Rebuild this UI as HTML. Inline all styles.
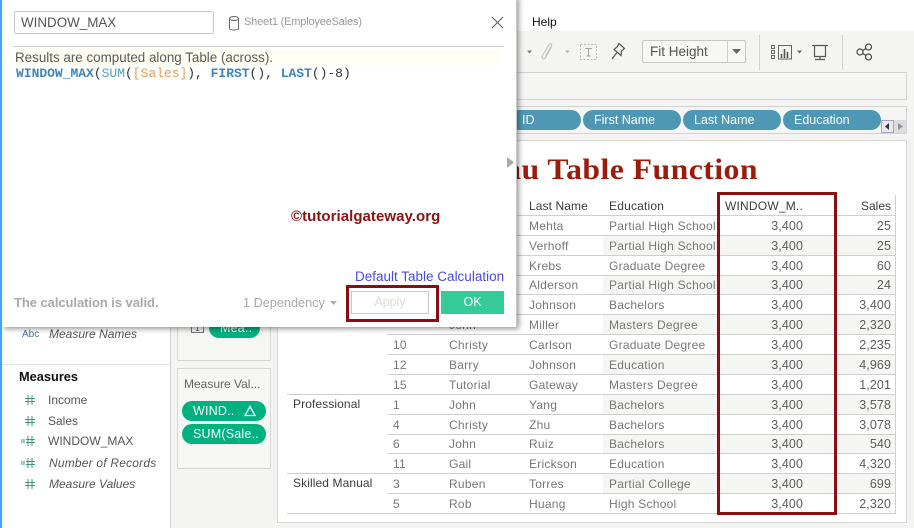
<!DOCTYPE html>
<html><head><meta charset="utf-8">
<style>
html,body{margin:0;padding:0}
body{width:914px;height:528px;overflow:hidden;position:relative;background:#f4f4f3;font-family:"Liberation Sans",sans-serif;font-size:12px;color:#6f6f6f}
div,span.a{position:absolute;box-sizing:border-box}
.t{position:absolute;height:16px;line-height:16px;white-space:nowrap}
.r{text-align:right}
.h{color:#3c3c3c}
.g{color:#3c3c3c}
.d{color:#777;letter-spacing:.25px}
.n{color:#5d5d5d;font-size:12.5px;letter-spacing:.1px}
.ln{position:absolute;height:1px;background:#cfcfcf;left:388px;width:508px}
.gl{left:287px;width:609px}
.sh{position:absolute;left:603px;width:292px;background:#f5f5f4}
.pill{position:absolute;height:20px;border-radius:10px;background:#4f98b5;color:#fff;line-height:20px;font-size:12.5px;padding-left:11px;white-space:nowrap;overflow:hidden}
.gp{position:absolute;background:#00b180;color:#fff;border-radius:10px;height:20px;line-height:20px;font-size:12.5px;padding-left:11px;left:182px;width:84px;letter-spacing:.2px;white-space:nowrap}
.li{position:absolute;left:48px;color:#555;font-size:12px;height:16px;line-height:16px;white-space:nowrap}
.i{font-style:italic}
.hs{position:absolute;left:20px;width:16px;height:10px}
</style></head>
<body>
<!-- top -->
<div style="left:0;top:0;width:914px;height:31px;background:#fff"></div>
<span class="t" style="left:532px;top:14px;color:#111;font-size:12px">Help</span>
<!-- toolbar -->
<svg style="position:absolute;left:520px;top:35px" width="360" height="35" viewBox="0 0 360 35" fill="none">
<path d="M7 15.500h5l-2.500 3z" fill="#777"/>
<path d="M31.500 12l-6 10.500c-1.500 2.500-4.500 1-3.200-1.500l6.700-11.500c1-1.800 3.500-.5 2.500 1.300l-6 10.500" stroke="#c4c4c4" stroke-width="1.200"/>
<path d="M45 15.500h5l-2.500 3z" fill="#b5b5b5"/>
<rect x="60.500" y="9.500" width="16" height="15" stroke="#bbb" stroke-dasharray="2 1.500"/>
<path d="M65 13.500h7M68.500 13.500v7.500M66.500 21h4" stroke="#a5a5a5"/>
<path d="M92 24l5-6.500M94 14.500l7 6 .5-4.500 3-2.500-5.500-5-2 3.500z" stroke="#555" stroke-width="1.200"/>
<path d="M239.500 0v35M322.500 0v35" stroke="#d0d0d0"/>
<path d="M251.500 10.500h3v3h-3zM251.500 15.500h3v3h-3zM251.500 20.500h3v3h-3z" stroke="#666"/>
<rect x="258.500" y="10.500" width="13" height="13.500" stroke="#666"/>
<path d="M261.500 23v-4M264.500 23v-9M267.500 23v-6" stroke="#555" stroke-width="1.600"/>
<path d="M277 15.500h5l-2.500 3z" fill="#666"/>
<path d="M292 10.500h16M294.500 11v10.500h11V11M300 22v3M295 24.500h10" stroke="#555" stroke-width="1.200"/>
<circle cx="340" cy="17" r="3" stroke="#444" stroke-width="1.200"/>
<circle cx="348.500" cy="12" r="3" stroke="#444" stroke-width="1.200"/>
<circle cx="348.500" cy="22" r="3" stroke="#444" stroke-width="1.200"/>
<path d="M342.500 15.500l3.500-2M342.500 18.500l3.500 2" stroke="#444" stroke-width="1.200"/>
</svg>
<div style="left:642px;top:40px;width:104px;height:23px;border:1px solid #c6c6c6;border-radius:2px;background:#f7f7f6"></div>
<div style="left:727px;top:41px;width:1px;height:21px;background:#cfcfcf"></div>
<svg style="position:absolute;left:731px;top:49px" width="12" height="6"><path d="M1 0h9l-4.500 5z" fill="#666"/></svg>
<span class="t" style="left:650px;top:44px;font-size:13.500px;color:#555">Fit Height</span>
<!-- shelves -->
<div style="left:500px;top:72px;width:407px;height:28px;border:1px solid #d2d2d2;background:#f5f5f4"></div>
<div style="left:500px;top:106px;width:407px;height:28px;border:1px solid #d2d2d2;background:#f5f5f4"></div>
<div class="pill" style="left:490px;top:110px;width:91px;padding-left:32px">ID</div>
<div class="pill" style="left:583px;top:110px;width:98px">First Name</div>
<div class="pill" style="left:683px;top:110px;width:98px">Last Name</div>
<div class="pill" style="left:783px;top:110px;width:98px">Education</div>
<div style="left:881px;top:120px;width:25px;height:13px;background:#dcdcdc"></div>
<svg style="position:absolute;left:881px;top:120px" width="25" height="13"><rect x=".5" y=".5" width="12" height="12" fill="#e8e8ee" stroke="#a8a8c0"/><path d="M8 3v7l-4-3.500z" fill="#333"/><path d="M17 3v7l5-3.500z" fill="#9a8f9a"/></svg>
<!-- left panel -->
<div style="left:0;top:31px;width:171px;height:497px;background:#fff;border-right:1px solid #d0d0d0"></div>
<div style="left:171px;top:31px;width:106px;height:497px;background:#f4f4f3"></div>
<div style="left:2px;top:364px;width:168px;height:1px;background:#e2e2e2"></div>
<div style="left:0;top:0;width:2px;height:528px;background:#3ea6f2;z-index:9"></div>
<span class="t" style="left:22px;top:327px;font-size:10px;color:#4c6f95">Abc</span>
<span class="li i" style="top:326px;left:49px">Measure Names</span>
<span class="t" style="left:19px;top:369px;font-size:12.800px;color:#111;font-weight:bold">Measures</span>
<svg class="hs" style="top:395px" viewBox="0 0 16 10" fill="none" stroke="#3f9a80"><path d="M5 3.500h10M5 6.500h10M8 0v10M12 0v10"/></svg><span class="li" style="top:392px">Income</span>
<svg class="hs" style="top:416px" viewBox="0 0 16 10" fill="none" stroke="#3f9a80"><path d="M5 3.500h10M5 6.500h10M8 0v10M12 0v10"/></svg><span class="li" style="top:413px">Sales</span>
<svg class="hs" style="top:436px" viewBox="0 0 16 10" fill="none" stroke="#3f9a80"><path d="M1 4h4M1 6h4M6 3.500h9M6 6.500h9M8 0v10M12 0v10"/></svg><span class="li" style="top:433px">WINDOW_MAX</span>
<svg class="hs" style="top:458px" viewBox="0 0 16 10" fill="none" stroke="#3f9a80"><path d="M1 4h4M1 6h4M6 3.500h9M6 6.500h9M8 0v10M12 0v10"/></svg><span class="li i" style="top:455px;left:49px;letter-spacing:.2px">Number of Records</span>
<svg class="hs" style="top:479px" viewBox="0 0 16 10" fill="none" stroke="#3f9a80"><path d="M5 3.500h10M5 6.500h10M8 0v10M12 0v10"/></svg><span class="li i" style="top:476px;left:49px">Measure Values</span>
<!-- cards -->
<div style="left:177px;top:300px;width:94px;height:61px;border:1px solid #d6d6d6;background:#f6f6f5"></div>
<div style="left:191px;top:323px;width:13px;height:10px;border:1px solid #777;font-size:8px;line-height:9px;text-align:center;color:#555">1</div>
<div class="gp" style="left:209px;width:51px;top:318px;padding-left:11px">Mea..</div>
<div style="left:177px;top:368px;width:94px;height:101px;border:1px solid #d6d6d6;background:#f6f6f5"></div>
<span class="t" style="left:184px;top:376px;color:#666;font-size:12px">Measure Val...</span>
<div class="gp" style="top:401px">WIND..</div>
<svg style="position:absolute;left:244px;top:405px" width="12" height="12"><path d="M6 1.500L1 10.500h10z" fill="none" stroke="#fff" stroke-width="1.300"/></svg>
<div class="gp" style="top:424px">SUM(Sale..</div>
<!-- viz -->
<div style="left:277px;top:140px;width:630px;height:383px;background:#fff;border:1px solid #d6d6d6"></div>
<span class="t" style="left:380px;width:378px;top:153px;height:34px;line-height:34px;text-align:right;font-family:'Liberation Serif',serif;font-weight:bold;font-size:30px;color:#9b1c0c;letter-spacing:.4px;transform:scaleX(1.06);transform-origin:right center">Tableau Table Function</span>
<!-- shading -->
<div class="sh" style="top:236px;height:19px"></div>
<div class="sh" style="top:276px;height:18px"></div>
<div class="sh" style="top:315px;height:19px"></div>
<div class="sh" style="top:355px;height:19px"></div>
<div class="sh" style="top:395px;height:19px"></div>
<div class="sh" style="top:435px;height:18px"></div>
<div class="sh" style="top:474px;height:19px"></div>
<!-- lines -->
<div class="ln" style="top:215px;left:510px;width:386px"></div>
<div class="ln" style="top:235px"></div><div class="ln" style="top:255px"></div><div class="ln" style="top:275px"></div><div class="ln" style="top:294px"></div><div class="ln" style="top:314px"></div><div class="ln" style="top:334px;left:387px"></div><div class="ln" style="top:354px"></div><div class="ln" style="top:374px"></div>
<div class="ln gl" style="top:394px"></div>
<div class="ln" style="top:414px"></div><div class="ln" style="top:434px"></div><div class="ln" style="top:453px"></div>
<div class="ln gl" style="top:473px"></div>
<div class="ln" style="top:493px"></div>
<div class="ln gl" style="top:513px"></div>
<div style="left:895px;top:195px;width:1px;height:319px;background:#cfcfcf"></div>
<!-- headers -->
<span class="t h" style="left:529px;top:198px;letter-spacing:.1px">Last Name</span>
<span class="t h" style="left:609px;top:198px;letter-spacing:.2px">Education</span>
<span class="t h" style="left:725px;top:198px;letter-spacing:.2px">WINDOW_M..</span>
<span class="t h r" style="left:820px;width:71px;top:198px">Sales</span>
<!-- rows -->
<span class="t d" style="left:529px;top:218px">Mehta</span><span class="t d" style="left:609px;top:218px">Partial High School</span><span class="t n r" style="left:740px;width:63px;top:218px">3,400</span><span class="t n r" style="left:840px;width:51px;top:218px">25</span>
<span class="t d" style="left:529px;top:238px">Verhoff</span><span class="t d" style="left:609px;top:238px">Partial High School</span><span class="t n r" style="left:740px;width:63px;top:238px">3,400</span><span class="t n r" style="left:840px;width:51px;top:238px">25</span>
<span class="t d" style="left:529px;top:258px">Krebs</span><span class="t d" style="left:609px;top:258px">Graduate Degree</span><span class="t n r" style="left:740px;width:63px;top:258px">3,400</span><span class="t n r" style="left:840px;width:51px;top:258px">60</span>
<span class="t d" style="left:529px;top:277px">Alderson</span><span class="t d" style="left:609px;top:277px">Partial High School</span><span class="t n r" style="left:740px;width:63px;top:277px">3,400</span><span class="t n r" style="left:840px;width:51px;top:277px">24</span>
<span class="t d" style="left:529px;top:297px">Johnson</span><span class="t d" style="left:609px;top:297px">Bachelors</span><span class="t n r" style="left:740px;width:63px;top:297px">3,400</span><span class="t n r" style="left:840px;width:51px;top:297px">3,400</span>
<span class="t d" style="left:449px;top:317px">John</span><span class="t d" style="left:529px;top:317px">Miller</span><span class="t d" style="left:609px;top:317px">Masters Degree</span><span class="t n r" style="left:740px;width:63px;top:317px">3,400</span><span class="t n r" style="left:840px;width:51px;top:317px">2,320</span>
<span class="t d" style="left:393px;top:337px">10</span><span class="t d" style="left:449px;top:337px">Christy</span><span class="t d" style="left:529px;top:337px">Carlson</span><span class="t d" style="left:609px;top:337px">Graduate Degree</span><span class="t n r" style="left:740px;width:63px;top:337px">3,400</span><span class="t n r" style="left:840px;width:51px;top:337px">2,235</span>
<span class="t d" style="left:393px;top:357px">12</span><span class="t d" style="left:449px;top:357px">Barry</span><span class="t d" style="left:529px;top:357px">Johnson</span><span class="t d" style="left:609px;top:357px">Education</span><span class="t n r" style="left:740px;width:63px;top:357px">3,400</span><span class="t n r" style="left:840px;width:51px;top:357px">4,969</span>
<span class="t d" style="left:393px;top:377px">15</span><span class="t d" style="left:449px;top:377px">Tutorial</span><span class="t d" style="left:529px;top:377px">Gateway</span><span class="t d" style="left:609px;top:377px">Masters Degree</span><span class="t n r" style="left:740px;width:63px;top:377px">3,400</span><span class="t n r" style="left:840px;width:51px;top:377px">1,201</span>
<span class="t g" style="left:293px;top:396px;letter-spacing:.1px">Professional</span>
<span class="t d" style="left:393px;top:397px">1</span><span class="t d" style="left:449px;top:397px">John</span><span class="t d" style="left:529px;top:397px">Yang</span><span class="t d" style="left:609px;top:397px">Bachelors</span><span class="t n r" style="left:740px;width:63px;top:397px">3,400</span><span class="t n r" style="left:840px;width:51px;top:397px">3,578</span>
<span class="t d" style="left:393px;top:417px">4</span><span class="t d" style="left:449px;top:417px">Christy</span><span class="t d" style="left:529px;top:417px">Zhu</span><span class="t d" style="left:609px;top:417px">Bachelors</span><span class="t n r" style="left:740px;width:63px;top:417px">3,400</span><span class="t n r" style="left:840px;width:51px;top:417px">3,078</span>
<span class="t d" style="left:393px;top:436px">6</span><span class="t d" style="left:449px;top:436px">John</span><span class="t d" style="left:529px;top:436px">Ruiz</span><span class="t d" style="left:609px;top:436px">Bachelors</span><span class="t n r" style="left:740px;width:63px;top:436px">3,400</span><span class="t n r" style="left:840px;width:51px;top:436px">540</span>
<span class="t d" style="left:393px;top:456px">11</span><span class="t d" style="left:449px;top:456px">Gail</span><span class="t d" style="left:529px;top:456px">Erickson</span><span class="t d" style="left:609px;top:456px">Education</span><span class="t n r" style="left:740px;width:63px;top:456px">3,400</span><span class="t n r" style="left:840px;width:51px;top:456px">4,320</span>
<span class="t g" style="left:293px;top:475px;letter-spacing:.1px">Skilled Manual</span>
<span class="t d" style="left:393px;top:476px">3</span><span class="t d" style="left:449px;top:476px">Ruben</span><span class="t d" style="left:529px;top:476px">Torres</span><span class="t d" style="left:609px;top:476px">Partial College</span><span class="t n r" style="left:740px;width:63px;top:476px">3,400</span><span class="t n r" style="left:840px;width:51px;top:476px">699</span>
<span class="t d" style="left:393px;top:496px">5</span><span class="t d" style="left:449px;top:496px">Rob</span><span class="t d" style="left:529px;top:496px">Huang</span><span class="t d" style="left:609px;top:496px">High School</span><span class="t n r" style="left:740px;width:63px;top:496px">3,400</span><span class="t n r" style="left:840px;width:51px;top:496px">2,320</span>
<!-- red box -->
<div style="left:717px;top:192px;width:120px;height:323px;border:3px solid #8a0d12"></div>
<!-- dialog -->
<div style="left:2px;top:-4px;width:515px;height:331px;background:#fff;box-shadow:2px 2px 5px rgba(0,0,0,.4);border-right:1px solid #c8c8c8;z-index:2"></div>
<div style="left:0;top:0;width:914px;height:528px;z-index:3;pointer-events:none">
<div style="left:14px;top:11px;width:200px;height:23px;border:1px solid #c8c8c8;border-radius:2px"></div>
<span class="t" style="left:21px;top:15px;font-size:13.400px;color:#555">WINDOW_MAX</span>
<svg style="position:absolute;left:228px;top:15px" width="13" height="16" fill="none" stroke="#666"><ellipse cx="6" cy="3.500" rx="4.500" ry="2"/><path d="M1.500 3.500v10c0 .8 2 1.500 4.500 1.500s4.500-.7 4.500-1.500v-10"/></svg>
<span class="t" style="left:244px;top:14px;font-size:11px;letter-spacing:-.18px;color:#9a9a9a">Sheet1 (EmployeeSales)</span>
<svg style="position:absolute;left:491px;top:16px" width="13" height="13" stroke="#666" stroke-width="1.200"><path d="M1 1l11 11M12 1L1 12"/></svg>
<div style="left:14px;top:46px;width:490px;height:1px;background:#ccc"></div>
<div style="left:15px;top:50px;width:485px;height:15px;background:#fffef3"></div>
<span class="t" style="left:15px;top:50px;font-size:13.400px;color:#5a5a5a">Results are computed along Table (across).</span>
<span class="t" style="left:16px;top:66px;font-family:'Liberation Mono',monospace;font-size:13px;letter-spacing:-.02px;color:#333"><b style="color:#3f84bd">WINDOW_MAX</b>(<span style="color:#4f9cc4">SUM</span>(<span style="color:#ec9a55">[Sales]</span>), <b style="color:#3f84bd">FIRST</b>(), <b style="color:#3f84bd">LAST</b>()-8)</span>
<svg style="position:absolute;left:507px;top:157px" width="8" height="11"><path d="M0 0v11l7-5.500z" fill="#a9a9b0"/></svg>
<span class="t" style="left:291px;top:209px;font-size:15px;font-weight:bold;color:#8a1212;letter-spacing:.05px">©tutorialgateway.org</span>
<span class="t" style="left:355px;top:269px;font-size:13.500px;color:#4a4ae6">Default Table Calculation</span>
<span class="t" style="left:14px;top:295px;font-size:13px;font-weight:bold;color:#a9a9a9;letter-spacing:-.06px">The calculation is valid.</span>
<span class="t" style="left:243px;top:295px;font-size:12.700px;color:#a9a9a9">1 Dependency</span>
<svg style="position:absolute;left:329px;top:301px" width="9" height="5"><path d="M1 0h7l-3.500 4z" fill="#aaa"/></svg>
<div style="left:351px;top:291px;width:78px;height:23px;border:1px solid #c9c9c9"></div>
<span class="t r" style="left:351px;width:78px;top:294px;text-align:center;color:#dcdcd4;font-size:12.500px">Apply</span>
<div style="left:441px;top:291px;width:63px;height:23px;background:#35cb99;color:#fff;text-align:center;line-height:22px;font-size:12.500px">OK</div>
<div style="left:346px;top:285px;width:93px;height:37px;border:3px solid #8a0d12"></div>
</div>
</body></html>
